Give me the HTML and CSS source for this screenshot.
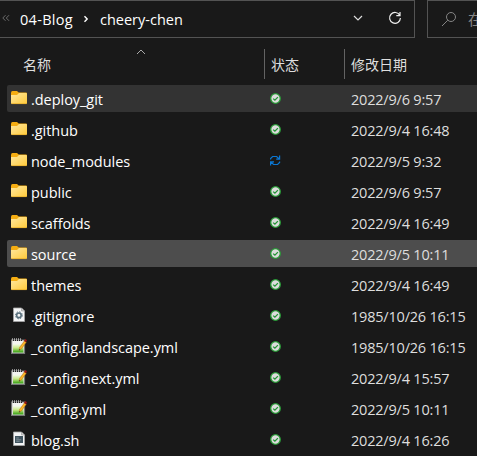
FILE: index.html
```
<!DOCTYPE html>
<html lang="zh-CN">
<head>
<meta charset="utf-8">
<title>cheery-chen</title>
<link rel="stylesheet" href="styles.css">
</head>
<body>
<svg class="defs" aria-hidden="true">
  <defs>
    <linearGradient id="gold" x1="0" y1="0" x2="1" y2="1"><stop offset="0" stop-color="#ffe8a0"/><stop offset="1" stop-color="#ffca3a"/></linearGradient>
    <linearGradient id="green" x1="0" y1="0" x2="0" y2="1"><stop offset="0" stop-color="#f4faec"/><stop offset=".45" stop-color="#cbe989"/><stop offset="1" stop-color="#2f9d0c"/></linearGradient>
    <symbol id="folder" viewBox="0 0 16 16"><path d="M0 3q0-2 1.500-2H6l1.700 1.500H15q1 0 1 1V7H0z" fill="#f5ad12"/><path d="M0 5h6l2-2h7q1 0 1 1v9q0 1-1 1H1q-1 0-1-1z" fill="url(#gold)"/><path d="M.5 13.600h15" stroke="#e8b02c" stroke-width=".8"/></symbol>
    <symbol id="gear" viewBox="0 0 16 16"><path d="M2.500 1h8l3 3v10.500h-11z" fill="#f5f6f7" stroke="#a6a6a6" stroke-width=".8"/><path d="M10.500 1v3h3" fill="#ccc" stroke="#999" stroke-width=".6"/><circle cx="7.900" cy="8.300" r="2.300" fill="none" stroke="#586f7c" stroke-width="1.600"/><circle cx="7.900" cy="8.300" r="3.500" fill="none" stroke="#586f7c" stroke-width="1" stroke-dasharray="1.370 1.370"/></symbol>
    <symbol id="script" viewBox="0 0 16 16"><path d="M2.500 1h8l3 3v10.500h-11z" fill="#f2f3f4" stroke="#a6a6a6" stroke-width=".8"/><path d="M10.500 1v3h3" fill="#ccc" stroke="#999" stroke-width=".6"/><path d="M4 5h8v7H4z" fill="#40545f"/><path d="M5.200 7h2.600M5.200 8.800h5M5.200 10.300h3.500" stroke="#a9b6bd" stroke-width=".6"/></symbol>
    <symbol id="notepad" viewBox="0 0 16 16"><path d="M.6 2h12.900v13.400H.6z" fill="#f4f5f1" stroke="#777" stroke-width="1.200"/><path d="M2 6h10.500v8.500H2z" fill="url(#green)"/><path d="M1 1.500h10" stroke="#aaa" stroke-width="2.500" stroke-dasharray="1 1"/><path d="M2 2.500h9" stroke="#222" stroke-dasharray="1 1"/><path d="M8 12.500l.7-3.300 4.700-6.500 2 1.500-4.800 6.600z" fill="#f5a51b" stroke="#8a5a14" stroke-width=".3"/><path d="M9.500 10.300l4.900-6.800" stroke="#ffd84a" stroke-width=".5"/><path d="M13 3l1.300-2 1.700 1.200-1 2z" fill="#9a1712"/><path d="M8 12.500l.3-1.500 1 .8z" fill="#333"/></symbol>
    <symbol id="ok" viewBox=".5 .5 11 11"><circle cx="6" cy="6" r="4.800" fill="#dcdcdc" stroke="#279a35" stroke-width="1.300"/><path d="M3.700 6.100l1.700 1.600 3-3.100" fill="none" stroke="#229334" stroke-width="1.300"/></symbol>
    <symbol id="sync" viewBox="0 0 11 11"><path d="M.6 4.500V3.500l2-2h4l2.700 2.500M9.600.5v3.700H6.200M9.600 6.500v1l-2 2h-4L.9 7M.6 10.500V6.800H4" fill="none" stroke="#0b77d2" stroke-width="1.200"/></symbol>
  </defs>
</svg>
<div class="window">
  <header class="toolbar">
    <div class="address">
      <svg class="back" viewBox="0 0 8 8"><path d="M3.500 1.200L.8 4l2.700 2.800M7 1.200L4.300 4 7 6.800"/></svg>
      <span class="crumb parent">04-Blog</span>
      <svg class="sep" viewBox="0 0 6 8"><path d="M1.500 1.200L4.200 4 1.500 6.800"/></svg>
      <span class="crumb current">cheery-chen</span>
      <svg class="drop" viewBox="0 0 10 6"><path d="M1 1l4 4 4-4"/></svg>
      <svg class="reload" viewBox="0 0 14 14"><path d="M11.800 4.400A5.400 5.400 0 1 0 12.400 7M12 1v3.600H8.300"/></svg>
    </div>
    <div class="search">
      <svg class="lens" viewBox="0 0 16 16"><circle cx="10" cy="6" r="4.500"/><path d="M6.800 9.200L1 15"/></svg>
      <span>在</span>
    </div>
  </header>
  <div class="head">
    <div class="h-name"><span>名称</span><svg class="sort" viewBox="0 0 10 6"><path d="M1 5l4-4 4 4"/></svg></div>
    <div class="h-cell">状态</div>
    <div class="h-cell">修改日期</div>
  </div>
  <main class="list">
    <div class="row hover"><svg class="icon"><use href="#folder"/></svg><span class="name">.deploy_git</span><svg class="status"><use href="#ok"/></svg><span class="date">2022/9/6 9:57</span></div>
    <div class="row"><svg class="icon"><use href="#folder"/></svg><span class="name">.github</span><svg class="status"><use href="#ok"/></svg><span class="date">2022/9/4 16:48</span></div>
    <div class="row"><svg class="icon"><use href="#folder"/></svg><span class="name">node_modules</span><svg class="status"><use href="#sync"/></svg><span class="date">2022/9/5 9:32</span></div>
    <div class="row"><svg class="icon"><use href="#folder"/></svg><span class="name">public</span><svg class="status"><use href="#ok"/></svg><span class="date">2022/9/6 9:57</span></div>
    <div class="row"><svg class="icon"><use href="#folder"/></svg><span class="name">scaffolds</span><svg class="status"><use href="#ok"/></svg><span class="date">2022/9/4 16:49</span></div>
    <div class="row selected"><svg class="icon"><use href="#folder"/></svg><span class="name">source</span><svg class="status"><use href="#ok"/></svg><span class="date">2022/9/5 10:11</span></div>
    <div class="row"><svg class="icon"><use href="#folder"/></svg><span class="name">themes</span><svg class="status"><use href="#ok"/></svg><span class="date">2022/9/4 16:49</span></div>
    <div class="row"><svg class="icon"><use href="#gear"/></svg><span class="name">.gitignore</span><svg class="status"><use href="#ok"/></svg><span class="date">1985/10/26 16:15</span></div>
    <div class="row"><svg class="icon"><use href="#notepad"/></svg><span class="name">_config.landscape.yml</span><svg class="status"><use href="#ok"/></svg><span class="date">1985/10/26 16:15</span></div>
    <div class="row"><svg class="icon"><use href="#notepad"/></svg><span class="name">_config.next.yml</span><svg class="status"><use href="#ok"/></svg><span class="date">2022/9/4 15:57</span></div>
    <div class="row"><svg class="icon"><use href="#notepad"/></svg><span class="name">_config.yml</span><svg class="status"><use href="#ok"/></svg><span class="date">2022/9/5 10:11</span></div>
    <div class="row"><svg class="icon"><use href="#script"/></svg><span class="name">blog.sh</span><svg class="status"><use href="#ok"/></svg><span class="date">2022/9/4 16:26</span></div>
  </main>
</div>
</body>
</html>
```
FILE: styles.css
```
* { box-sizing: border-box; }
body {
  margin: 0;
  background: #191919;
  color: #fff;
  font: 14.5px/27px "Open Sans", "Noto Sans CJK SC", sans-serif;
}
.defs { display: block; width: 0; height: 0; }
.window { width: 477px; height: 456px; overflow: hidden; }
svg { flex: none; fill: none; stroke-linecap: butt; }
.toolbar { display: flex; gap: 12px; height: 38px; }
.address {
  display: flex;
  flex: none;
  align-items: center;
  width: 415px;
  padding-left: 2px;
  border: 1px solid #535353;
  border-left: 0;
}
.back { width: 8px; height: 8px; margin-bottom: 3px; stroke: #6b6b6b; }
.crumb { flex: none; white-space: nowrap; letter-spacing: 0.3px; }
.parent { width: 53px; margin-left: 10px; }
.sep { width: 6px; height: 8px; margin-left: 10px; stroke: #fff; stroke-width: 1.4; }
.current { width: 84px; margin-left: 11px; letter-spacing: 0; }
.drop { width: 10px; height: 6px; margin-left: 169px; margin-bottom: 2px; stroke: #ddd; stroke-width: 1.2; }
.reload { width: 14px; height: 14px; margin-left: 25px; margin-bottom: 2px; stroke: #eee; stroke-width: 1.2; }
.search {
  display: flex;
  align-items: center;
  flex: none;
  width: 70px;
  padding-left: 13px;
  border: 1px solid #535353;
  color: #858585;
}
.lens { width: 16px; height: 16px; margin-right: 11px; stroke: #858585; }
.head {
  display: grid;
  grid-template-columns: 264px 80px 133px;
  height: 47px;
  padding-top: 11px;
  font-size: 14px;
  line-height: 32px;
  color: #dedede;
}
.h-name { display: flex; padding-left: 23px; }
.sort { width: 10px; height: 6px; margin-left: 85px; stroke: #aaa; }
.h-cell { height: 30px; padding-left: 6px; border-left: 1px solid #636363; }
.list { display: grid; gap: 4px; padding-left: 7px; }
.row {
  display: grid;
  grid-template-columns: 20px 239px 81px 128px;
  align-items: center;
  height: 27px;
  padding-left: 4px;
  border-radius: 2px 0 0 2px;
}
.hover { background: #333; }
.selected { background: #4d4d4d; }
.icon { width: 16px; height: 16px; margin-bottom: 1px; }
.name, .date { padding-top: 2px; line-height: 25px; white-space: nowrap; }
.name { letter-spacing: -0.04px; }
.status { width: 11px; height: 11px; }
.date { color: #dedede; letter-spacing: -0.2px; }
```
